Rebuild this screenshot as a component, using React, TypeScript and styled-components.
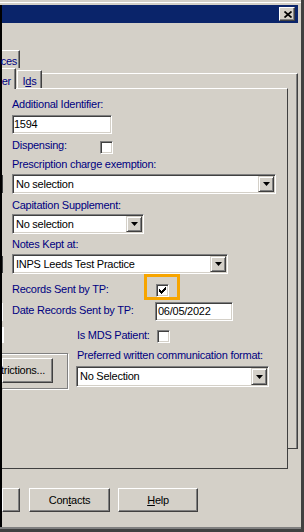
import React from 'react';
import styled, { createGlobalStyle, css } from 'styled-components';

const FACE = '#d4d0c8';
const SHADOW = '#808080';
const DARK = '#404040';
const LABEL = '#000080';

const GlobalStyle = createGlobalStyle`
  html, body { margin: 0; padding: 0; background: ${FACE}; }
  body {
    font-family: 'Liberation Sans', Arial, sans-serif;
    font-size: 11px;
    letter-spacing: -0.25px;
  }
  * { box-sizing: border-box; }
`;

const raised = css`
  background: ${FACE};
  border: 1px solid;
  border-color: #fff ${DARK} ${DARK} #fff;
  box-shadow: inset -1px -1px ${SHADOW};
`;

const sunken = css`
  background: #fff;
  border: 1px solid;
  border-color: ${SHADOW} #fff #fff ${SHADOW};
  box-shadow: inset 1px 1px ${DARK}, inset -1px -1px ${FACE};
`;

const Screen = styled.div`
  width: 304px;
  height: 532px;
  overflow: hidden;
  background: ${FACE};
  border-right: 3px solid ${DARK};
  border-bottom: 3px solid ${DARK};
  display: flex;
  flex-direction: column;
`;

const Frame = styled.div`
  flex: 1;
  display: flex;
  flex-direction: column;
  border-bottom: 2px solid ${SHADOW};
`;

const TopEdge = styled.div`
  height: 5px;
  flex-shrink: 0;
  background: #fff;
  border-top: 2px solid ${FACE};
  border-bottom: 2px solid ${FACE};
`;

const Body = styled.div`
  flex: 1;
  display: flex;
  flex-direction: column;
  border-left: 2px solid #000;
  padding-right: 3px;
`;

const TitleBar = styled.div`
  height: 18px;
  flex-shrink: 0;
  background: #0a246a;
  display: flex;
  justify-content: flex-end;
  align-items: center;
  padding-right: 3px;
`;

const CloseButton = styled.div`
  ${raised};
  width: 16px;
  height: 14px;
  display: flex;
  align-items: center;
  justify-content: center;
  padding-left: 1px;
`;

const TabRow = styled.div<{ $mt?: number; $h: number }>`
  display: flex;
  align-items: flex-start;
  height: ${p => p.$h}px;
  margin-top: ${p => p.$mt || 0}px;
`;

const Tab = styled.div<{
  $w: number;
  $h: number;
  $mt?: number;
  $ml?: number;
  $pt: number;
  $pr?: number;
  $active?: boolean;
  $left?: boolean;
}>`
  width: ${p => p.$w}px;
  height: ${p => p.$h}px;
  margin-top: ${p => p.$mt || 0}px;
  margin-left: ${p => p.$ml || 0}px;
  padding-top: ${p => p.$pt}px;
  padding-right: ${p => p.$pr || 0}px;
  background: ${FACE};
  border-top: 1px solid #fff;
  border-left: ${p => (p.$left ? '1px solid #fff' : 'none')};
  border-right: 1px solid ${DARK};
  box-shadow: inset -1px 0 ${SHADOW};
  color: ${LABEL};
  line-height: 13px;
  white-space: nowrap;
  display: flex;
  justify-content: ${p => (p.$left ? 'center' : 'flex-end')};
  position: relative;
  z-index: ${p => (p.$active ? 1 : 0)};
  margin-bottom: ${p => (p.$active ? -1 : 0)}px;
`;

const TabFiller = styled.div`
  flex: 1;
  margin-top: 5px;
  height: 15px;
  border-top: 1px solid #fff;
  border-right: 1px solid ${DARK};
  box-shadow: inset -1px 0 ${SHADOW};
`;

const PanelRow = styled.div`
  display: flex;
  height: 381px;
`;

const InnerPanel = styled.div`
  width: 286px;
  height: 381px;
  border-top: 1px solid #fff;
  border-right: 1px solid ${DARK};
  border-bottom: 1px solid ${DARK};
  display: flex;
  flex-direction: column;
`;

const OuterStrip = styled.div`
  flex: 1;
  height: 361px;
  border-right: 1px solid ${DARK};
  border-bottom: 1px solid ${DARK};
  box-shadow: inset -1px 0 ${SHADOW};
`;

const Line = styled.div<{ $mt: number }>`
  display: flex;
  align-items: flex-start;
  margin-top: ${p => p.$mt}px;
`;

const Gutter = styled.div`
  width: 10px;
  flex-shrink: 0;
  align-self: center;
  display: flex;
`;

const Stub = styled.div<{ $h: number; $c?: string; $w?: number }>`
  width: ${p => p.$w || 1}px;
  height: ${p => p.$h}px;
  background: ${p => p.$c || DARK};
`;

const Label = styled.span<{ $w?: number; $mt?: number; $ml?: number }>`
  color: ${LABEL};
  line-height: 13px;
  white-space: nowrap;
  flex-shrink: 0;
  width: ${p => (p.$w ? `${p.$w}px` : 'auto')};
  margin-top: ${p => p.$mt || 0}px;
  margin-left: ${p => p.$ml || 0}px;
`;

const TextBox = styled.div<{ $w: number; $pl?: number }>`
  ${sunken};
  width: ${p => p.$w}px;
  height: 19px;
  padding-left: ${p => p.$pl ?? 2}px;
  display: flex;
  align-items: center;
  line-height: 13px;
  color: #000;
  flex-shrink: 0;
`;

const ComboBox = styled.div<{ $w: number; $h?: number }>`
  ${sunken};
  width: ${p => p.$w}px;
  height: ${p => p.$h || 20}px;
  padding: 1px 1px 1px 3px;
  display: flex;
  align-items: center;
  color: #000;
  line-height: 13px;
  flex-shrink: 0;
`;

const ComboText = styled.span`
  flex: 1;
  white-space: nowrap;
  overflow: hidden;
`;

const DropButton = styled.div`
  background: ${FACE};
  border: 1px solid;
  border-color: ${FACE} ${DARK} ${DARK} ${FACE};
  box-shadow: inset 1px 1px #fff, inset -1px -1px ${SHADOW};
  width: 16px;
  align-self: stretch;
  display: flex;
  align-items: center;
  justify-content: center;
`;

const CheckBox = styled.div<{ $mt?: number }>`
  ${sunken};
  width: 13px;
  height: 13px;
  flex-shrink: 0;
  margin-top: ${p => p.$mt || 0}px;
  display: flex;
  align-items: center;
  justify-content: center;
`;

const Mark = styled.div`
  position: relative;
  margin-top: 1px;
`;

const Highlight = styled.div`
  position: absolute;
  left: -12px;
  top: -10px;
  width: 36px;
  height: 26px;
  border: 3px solid #f7a500;
`;

const Section = styled.div`
  display: flex;
  margin-top: 6px;
`;

const LeftCol = styled.div`
  width: 66px;
  flex-shrink: 0;
  display: flex;
  flex-direction: column;
`;

const GroupBox = styled.div`
  margin-top: 10px;
  height: 36px;
  border-top: 1px solid ${SHADOW};
  border-right: 1px solid ${SHADOW};
  border-bottom: 1px solid ${SHADOW};
  box-shadow: 1px 1px 0 #fff, inset 0 1px 0 #fff;
  padding-top: 4px;
`;

const RightCol = styled.div`
  margin-left: 8px;
  display: flex;
  flex-direction: column;
`;

const Button = styled.div<{ $w: number; $h?: number; $ml?: number; $pr?: number; $end?: boolean }>`
  ${raised};
  width: ${p => p.$w}px;
  height: ${p => p.$h || 24}px;
  margin-left: ${p => p.$ml || 0}px;
  padding-right: ${p => p.$pr || 0}px;
  display: flex;
  align-items: center;
  justify-content: ${p => (p.$end ? 'flex-end' : 'center')};
  color: #000;
  white-space: nowrap;
  line-height: 13px;
  flex-shrink: 0;
`;

const ButtonRow = styled.div`
  display: flex;
  margin-top: 19px;
`;

const U = styled.span`
  text-decoration: underline;
`;

const Arrow = () => (
  <svg width="7" height="4" viewBox="0 0 7 4">
    <path d="M0 0H7L3.5 4Z" fill="#000" />
  </svg>
);

const Tick = () => (
  <svg width="7" height="7" viewBox="0 0 7 7" shapeRendering="crispEdges">
    <path d="M0 2H1V3H2V4H3V3H4V2H5V1H6V0H7V3H6V4H5V5H4V6H3V7H2V6H1V5H0Z" fill="#000" />
  </svg>
);

const CloseGlyph = () => (
  <svg width="8" height="7" viewBox="0 0 8 7">
    <path d="M0.5 0.5L7.5 6.5M7.5 0.5L0.5 6.5" stroke="#000" strokeWidth="1.7" />
  </svg>
);

const Combo = ({ w, h, text }: { w: number; h?: number; text: string }) => (
  <ComboBox $w={w} $h={h}>
    <ComboText>{text}</ComboText>
    <DropButton>
      <Arrow />
    </DropButton>
  </ComboBox>
);

const App = () => (
  <Screen>
    <GlobalStyle />
    <Frame>
      <TopEdge />
      <Body>
        <TitleBar>
          <CloseButton>
            <CloseGlyph />
          </CloseButton>
        </TitleBar>

        <TabRow $mt={27} $h={18}>
          <Tab $w={18} $h={18} $pt={4} $pr={2}>
            ces
          </Tab>
        </TabRow>
        <TabRow $h={20}>
          <Tab $w={14} $h={21} $pt={6} $pr={4} $active>
            er
          </Tab>
          <Tab $w={25} $h={18} $mt={2} $ml={1} $pt={4} $left>
            I<U>d</U>s
          </Tab>
          <TabFiller />
        </TabRow>

        <PanelRow>
          <InnerPanel>
            <Line $mt={9}>
              <Gutter />
              <Label>Additional Identifier:</Label>
            </Line>
            <Line $mt={4}>
              <Gutter />
              <TextBox $w={100} $pl={1}>1594</TextBox>
            </Line>
            <Line $mt={7}>
              <Gutter />
              <Label $w={88} $mt={-2}>Dispensing:</Label>
              <CheckBox />
            </Line>
            <Line $mt={4}>
              <Gutter />
              <Label>Prescription charge exemption:</Label>
            </Line>
            <Line $mt={3}>
              <Gutter>
                <Stub $h={18} />
              </Gutter>
              <Combo w={264} text="No selection" />
            </Line>
            <Line $mt={5}>
              <Gutter />
              <Label>Capitation Supplement:</Label>
            </Line>
            <Line $mt={2}>
              <Gutter />
              <Combo w={132} text="No selection" />
            </Line>
            <Line $mt={4}>
              <Gutter />
              <Label>Notes Kept at:</Label>
            </Line>
            <Line $mt={3}>
              <Gutter>
                <Stub $h={17} />
              </Gutter>
              <Combo w={216} text="INPS Leeds Test Practice" />
            </Line>
            <Line $mt={9}>
              <Gutter />
              <Label $w={144}>Records Sent by TP:</Label>
              <Mark>
                <CheckBox>
                  <Tick />
                </CheckBox>
                <Highlight />
              </Mark>
            </Line>
            <Line $mt={5}>
              <Gutter>
                <Stub $h={18} $c="#fff" />
              </Gutter>
              <Label $w={143} $mt={2}>Date Records Sent by TP:</Label>
              <TextBox $w={78}>06/05/2022</TextBox>
            </Line>
            <Section>
              <LeftCol>
                <Stub $h={16} $w={2} $c="#fff" />
                <GroupBox>
                  <Button $w={51} $h={25} $pr={7} $end>
                    trictions...
                  </Button>
                </GroupBox>
              </LeftCol>
              <RightCol>
                <Line $mt={0}>
                  <Label $w={80} $mt={2} $ml={1}>Is MDS Patient:</Label>
                  <CheckBox $mt={3} />
                </Line>
                <Line $mt={6}>
                  <Label $ml={1}>Preferred written communication format:</Label>
                </Line>
                <Line $mt={4}>
                  <Combo w={193} h={21} text="No Selection" />
                </Line>
              </RightCol>
            </Section>
          </InnerPanel>
          <OuterStrip />
        </PanelRow>

        <ButtonRow>
          <Button $w={18} />
          <Button $w={81} $ml={9}>
            Con<U>t</U>acts
          </Button>
          <Button $w={80} $ml={8}>
            <U>H</U>elp
          </Button>
        </ButtonRow>
      </Body>
    </Frame>
  </Screen>
);

export default App;
